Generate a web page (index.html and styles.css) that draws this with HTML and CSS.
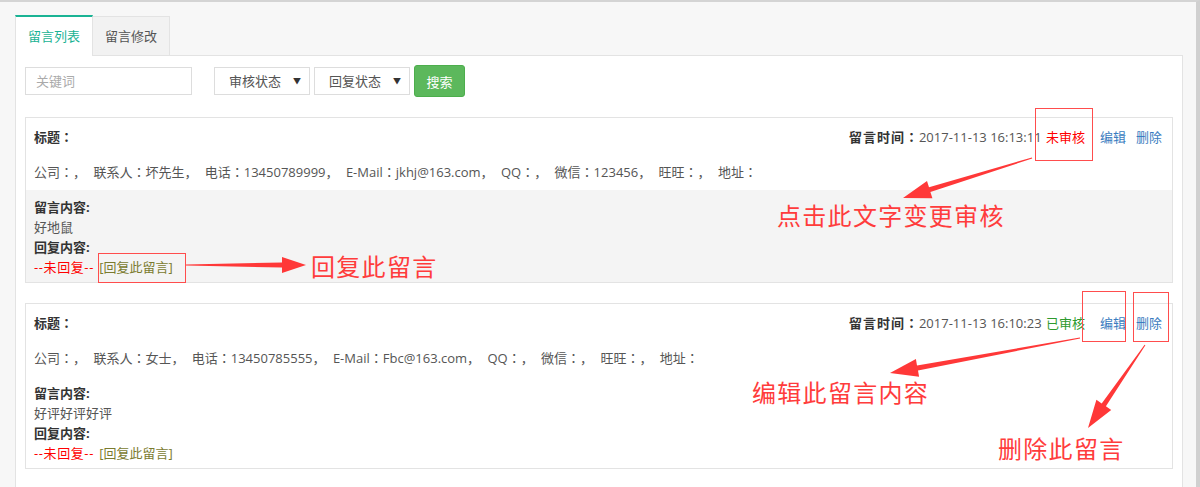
FILE: index.html
```html
<!DOCTYPE html>
<html lang="zh-CN">
<head>
    <meta charset="UTF-8">
    <title>留言列表</title>
    <link rel="stylesheet" href="styles.css">
</head>
<body>
    <div class="page">
        <div class="tabs">
            <a class="tab active">留言列表</a>
            <a class="tab">留言修改</a>
        </div>

        <div class="panel">
            <form class="search">
                <input type="text" class="kw" placeholder="关键词">
                <label class="select first">
                    <select><option>审核状态</option><option>未审核</option><option>已审核</option></select>
                </label>
                <label class="select">
                    <select><option>回复状态</option><option>未回复</option><option>已回复</option></select>
                </label>
                <button type="button" class="btn">搜索</button>
            </form>

            <div class="msg">
                <div class="msg-head" lang="ja">
                    <div class="msg-row">
                        <b>标题：</b>
                        <span class="meta"><b>留言时间：</b>2017-11-13 16:13:11 <a class="st st-no">未审核</a><a class="op">编辑</a><a class="op del">删除</a></span>
                    </div>
                    <div class="info">公司：， 联系人：坏先生， 电话：13450789999， E-Mail：jkhj@163.com， QQ：， 微信：123456， 旺旺：， 地址：</div>
                </div>
                <div class="msg-body gray">
                    <b>留言内容:</b>
                    <div>好地鼠</div>
                    <b>回复内容:</b>
                    <div><span class="no-reply">--未回复--</span> <a class="reply">[回复此留言]</a></div>
                </div>
            </div>

            <div class="msg">
                <div class="msg-head" lang="ja">
                    <div class="msg-row">
                        <b>标题：</b>
                        <span class="meta"><b>留言时间：</b>2017-11-13 16:10:23 <a class="st st-ok">已审核</a><a class="op">编辑</a><a class="op del">删除</a></span>
                    </div>
                    <div class="info">公司：， 联系人：女士， 电话：13450785555， E-Mail：Fbc@163.com， QQ：， 微信：， 旺旺：， 地址：</div>
                </div>
                <div class="msg-body">
                    <b>留言内容:</b>
                    <div>好评好评好评</div>
                    <b>回复内容:</b>
                    <div><span class="no-reply">--未回复--</span> <a class="reply">[回复此留言]</a></div>
                </div>
            </div>
        </div>
    </div>

    <!-- annotations drawn over the screenshot -->
    <div class="notes">
        <svg width="1200" height="487" viewBox="0 0 1200 487">
            <g fill="none" stroke="#ff4d4d" stroke-width="1">
                <rect x="1035.5" y="108.5" width="57" height="52"/>
                <rect x="98.5" y="253.5" width="87" height="29"/>
                <rect x="1082.5" y="291.5" width="43" height="50"/>
                <rect x="1133.5" y="292.5" width="35" height="49"/>
            </g>
            <g fill="#ff3838">
                <polygon points="1031.9,157.5 929,187.3 927,181.1 903,198 932.4,198.3 930.4,192.1 1032.2,158.5"/>
                <polygon points="186,264.5 282,262.5 282,257 306,265 282,273 282,267.5 186,265.5"/>
                <polygon points="1079.9,337.5 917,365.5 915.9,359.1 890,373 919.1,376.8 918,370.4 1080.1,338.5"/>
                <polygon points="1144.6,344.7 1101.7,403.5 1096.4,399.8 1088,428 1111.2,410 1105.9,406.3 1145.4,345.3"/>
            </g>
        </svg>
        <span class="note note-audit">点击此文字变更审核</span>
        <span class="note note-reply">回复此留言</span>
        <span class="note note-edit">编辑此留言内容</span>
        <span class="note note-del">删除此留言</span>
    </div>
</body>
</html>
```

FILE: styles.css
```css
body {
    margin: 0;
    background-color: #f7f7f7;
    font-family: "Open Sans", "Noto Sans CJK SC", sans-serif;
    font-size: 13px;
    color: #555;
}
b {
    color: #333;
}
a {
    cursor: pointer;
}
.page {
    border-top: 2px solid #d4d4d4;
    border-right: 4px solid #d0d0d0;
    padding: 13px 13px 20px 15px;
}
.tabs {
    display: flex;
}
.tab {
    display: block;
    height: 38px;
    line-height: 38px;
    padding: 0 12px;
    margin-top: 1px;
    border: 1px solid #e3e3e3;
    border-bottom: none;
    background-color: #f2f2f2;
    color: #555;
}
.tab + .tab {
    margin-left: -1px;
}
.tab.active {
    position: relative;
    height: 39px;
    margin-top: 0;
    margin-bottom: -1px;
    border-top: 2px solid #1ab394;
    background-color: #fff;
    color: #1ab394;
}
.panel {
    background-color: #fff;
    border: 1px solid #e3e3e3;
    padding: 9px 9px 20px;
}
.search {
    display: flex;
    align-items: center;
    height: 32px;
    margin: 0;
}
.kw {
    box-sizing: border-box;
    width: 167px;
    height: 28px;
    padding: 0 10px;
    border: 1px solid #ddd;
    font: inherit;
    color: #555;
    outline: none;
}
.kw::placeholder {
    color: #aaa;
}
.select {
    position: relative;
    margin-left: 4px;
}
.select.first {
    margin-left: 22px;
}
.select select {
    box-sizing: border-box;
    width: 96px;
    height: 28px;
    padding-left: 14px;
    border: 1px solid #ddd;
    border-radius: 0;
    background-color: #fff;
    font: inherit;
    color: #555;
    -webkit-appearance: none;
    appearance: none;
}
.select::after {
    content: "▼";
    position: absolute;
    right: 9px;
    top: 8px;
    font-size: 8px;
    color: #333;
    pointer-events: none;
}
.btn {
    margin-left: 4px;
    width: 51px;
    height: 32px;
    padding: 0;
    background-color: #5cb85c;
    border: 1px solid #4cae4c;
    border-radius: 3px;
    color: #fff;
    font: inherit;
}
.msg {
    margin-top: 20px;
    border: 1px solid #e3e3e3;
}
/* JP face centres the full-width colon, like the original */
.msg-head {
    padding: 9px 10px 8px 8px;
    font-family: "Open Sans", "Noto Sans CJK JP", "Noto Sans CJK SC", sans-serif;
}
.msg-row {
    display: flex;
    justify-content: space-between;
    line-height: 20px;
}
.meta b {
    letter-spacing: 1px;
}
.info {
    margin-top: 15px;
    line-height: 20px;
    word-spacing: 4px;
}
.msg-body {
    padding: 7px 8px 5px;
    line-height: 20px;
}
.msg-body.gray {
    background-color: #f4f4f4;
}
.st {
    margin-left: 1px;
}
.st-no {
    color: #f00;
}
.st-ok {
    color: #2e9a2e;
}
.op {
    margin-left: 15px;
    color: #3a7cc0;
}
.op.del {
    margin-left: 10px;
}
.no-reply {
    color: #f00;
    letter-spacing: 0.6px;
}
.reply {
    margin-left: 2px;
    color: #7b7b2f;
}
.notes {
    position: absolute;
    left: 0;
    top: 0;
    width: 1200px;
    height: 487px;
    pointer-events: none;
}
.notes svg {
    position: absolute;
    left: 0;
    top: 0;
}
.note {
    position: absolute;
    font-family: "Noto Sans CJK SC", sans-serif;
    font-size: 24px;
    line-height: 24px;
    letter-spacing: 1.3px;
    color: #ff3c3c;
    white-space: nowrap;
}
.note-audit {
    left: 777px;
    top: 203px;
}
.note-reply {
    left: 311px;
    top: 254px;
}
.note-edit {
    left: 752px;
    top: 380px;
}
.note-del {
    left: 998px;
    top: 436px;
}
```
